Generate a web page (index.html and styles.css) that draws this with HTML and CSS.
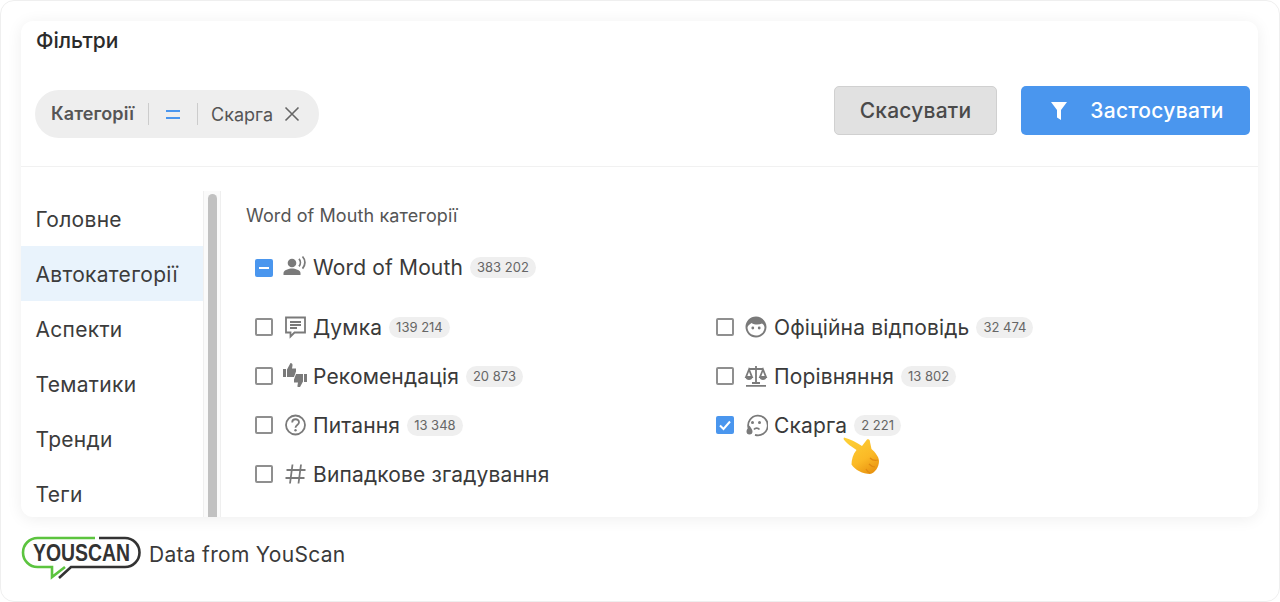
FILE: index.html
```html
<!DOCTYPE html>
<html>
<head>
  <title>Фільтри</title>
  <link rel="stylesheet" href="styles.css">
</head>
<body>
  <div class="frame">
    <div class="card">
      <div class="card-head">
        <h1 class="title">Фільтри</h1>
        <div class="toolbar">
          <div class="chip">
            <b class="chip-name">Категорії</b>
            <span class="chip-op"><i></i><i></i></span>
            <span class="chip-value">Скарга</span>
            <svg class="chip-close" viewBox="0 0 16 16"><path d="M1.500 1.500l13 13M14.500 1.500l-13 13"/></svg>
          </div>
          <div class="actions">
            <button class="btn btn-cancel">Скасувати</button>
            <button class="btn btn-apply">
              <svg class="btn-icon" viewBox="0 0 18 20"><path d="M1 1h16l-6 8v10l-4-2.500V9z"/></svg>
              Застосувати
            </button>
          </div>
        </div>
      </div>

      <div class="card-body">
        <ul class="side">
          <li>Головне</li>
          <li class="active">Автокатегорії</li>
          <li>Аспекти</li>
          <li>Тематики</li>
          <li>Тренди</li>
          <li>Теги</li>
        </ul>
        <div class="scroll"><div class="thumb"></div></div>

        <div class="content">
          <div class="content-title">Word of Mouth категорії</div>

          <div class="opt opt-root">
            <span class="box box-mixed"><i></i></span>
            <svg class="icon" viewBox="0 0 24 24"><circle cx="9" cy="8" r="4.300" class="fill"/><path class="fill" d="M.5 20v-2c0-3 5.500-4.500 8.500-4.500s8.500 1.500 8.500 4.500v2z"/><path class="line" d="M16 3.800c1.800 2.100 1.800 5.400 0 7.500M19.500 1.500c3.200 3.400 3.200 8.800 0 12.200"/></svg>
            <span class="opt-name">Word of Mouth</span>
            <span class="count">383 202</span>
          </div>

          <div class="opts">
            <div class="opt">
              <span class="box"></span>
              <svg class="icon" viewBox="0 0 24 24"><path class="line" d="M3 2.500h19v15H11.500L7.500 21.500v-4H3zM7 7h11M7 10h11M7 13h7"/></svg>
              <span class="opt-name">Думка</span>
              <span class="count">139 214</span>
            </div>
            <div class="opt">
              <span class="box"></span>
              <svg class="icon icon-wide" viewBox="0 0 24 24"><path class="fill" d="M0 6h3v8H0zM4 14V6.500L7.500 0c1.500 0 2.200 1 2 2.500L9 5.500h4v3l-2 5.500z"/><path class="fill" transform="rotate(180 12 12.500)" d="M0 6h3v8H0zM4 14V6.500L7.500 0c1.500 0 2.200 1 2 2.500L9 5.500h4v3l-2 5.500z"/></svg>
              <span class="opt-name">Рекомендація</span>
              <span class="count">20 873</span>
            </div>
            <div class="opt">
              <span class="box"></span>
              <svg class="icon" viewBox="0 0 24 24"><circle class="line" cx="12.500" cy="12" r="9.500"/><path class="line" d="M9.200 9.500c0-4.300 6.800-4.300 6.800-.2 0 2.700-3.500 2.700-3.500 5.400"/><circle class="fill" cx="12.500" cy="17.300" r="1.200"/></svg>
              <span class="opt-name">Питання</span>
              <span class="count">13 348</span>
            </div>
            <div class="opt">
              <span class="box"></span>
              <svg class="icon" viewBox="0 0 24 24"><path class="line" d="M9.500 2.500L7 21.500M18 2.500L15.500 21.500M3.500 8h19M2.500 16h19"/></svg>
              <span class="opt-name">Випадкове згадування</span>
            </div>
          </div>

          <div class="opts opts-right">
            <div class="opt">
              <span class="box"></span>
              <svg class="icon" viewBox="0 0 24 24"><path class="fill" fill-rule="evenodd" d="M12 1.500c5.800 0 10.500 4.700 10.500 10.500S17.800 22.500 12 22.500 1.500 17.800 1.500 12 6.200 1.500 12 1.500zM7.500 8c-1.500 1.500-4 2.500-4 4.500 0 4.400 4 8 8.500 8s8.500-3.600 8.500-8c0-1.500-1-3-2.500-4-3 1.500-7.500 1.500-10.500-.5z"/><circle class="fill" cx="8.800" cy="13" r="1.400"/><circle class="fill" cx="15.200" cy="13" r="1.400"/></svg>
              <span class="opt-name">Офіційна відповідь</span>
              <span class="count">32 474</span>
            </div>
            <div class="opt">
              <span class="box"></span>
              <svg class="icon" viewBox="0 0 24 24"><path class="line" d="M12 2v17M5 5h14M2 21.800h20M8 19h8M5 5.500L2 13h6zM19 5.500L16 13h6z"/><path class="fill" d="M1.500 13h7c0 4-7 4-7 0zM15.500 13h7c0 4-7 4-7 0z"/></svg>
              <span class="opt-name">Порівняння</span>
              <span class="count">13 802</span>
            </div>
            <div class="opt">
              <span class="box box-checked">
                <svg viewBox="0 0 18 18"><path d="M4 9.500l3.500 3.500L14 5.500"/></svg>
              </span>
              <svg class="icon" viewBox="0 0 24 24"><path class="line" d="M4.500 15A9.800 9.800 0 1 1 11 21.800"/><circle class="fill" cx="8.500" cy="9.500" r="1.500"/><circle class="fill" cx="15.500" cy="9.500" r="1.500"/><path class="line" d="M10 16.500c1.300-1.800 4-1.800 5.500 0"/><path class="fill" d="M5.500 12.500c1.500 2.800 3 4 3 6a3 3 0 0 1-6 0c0-2 1.500-3.200 3-6z"/></svg>
              <span class="opt-name">Скарга</span>
              <span class="count">2 221</span>
            </div>
          </div>

          <svg class="hand" viewBox="0 0 38 40">
            <defs>
              <linearGradient id="handFill" x1="0.2" y1="0" x2="0.8" y2="1">
                <stop offset="0" stop-color="#fdcf35"/>
                <stop offset="0.6" stop-color="#fbb926"/>
                <stop offset="1" stop-color="#e8920f"/>
              </linearGradient>
            </defs>
            <path fill="url(#handFill)" d="M2 1.500C8 3 15 6.500 20 10L25 3.500C27 2.500 28 4 28 6L29.500 13C33 16 37 21 37 25C37 31 33 37 28 38C21 38 13 34 9.500 28.500C9.500 24 11 18 14.500 14C10 11 4 7 1.500 3z"/>
            <path fill="none" stroke="#e08a12" stroke-width="1.200" d="M36 24C33 25 30 24 28 22M33 31C31 31 29 30 27 28M28 37C26 36 25 35 24 33"/>
          </svg>
        </div>
      </div>
    </div>

    <div class="source">
      <svg class="logo" viewBox="0 0 120 44">
        <path class="logo-green" d="M74 2H16.500A14.500 14.500 0 0 0 16.500 31H31V41L44 31"/>
        <path class="logo-dark" d="M78 2H104A14.500 14.500 0 0 1 104 31H50L38 42"/>
        <text class="logo-text" x="12" y="25" textLength="97" lengthAdjust="spacingAndGlyphs">YOUSCAN</text>
      </svg>
      <span class="source-text">Data from YouScan</span>
    </div>
  </div>
</body>
</html>
```

FILE: styles.css
```css
* {
  box-sizing: border-box;
}
html, body {
  margin: 0;
  height: 100%;
  background: #fff;
}
body {
  font-family: Inter, "Noto Sans", sans-serif;
  color: #333;
  overflow: hidden;
}
.frame {
  width: 1280px;
  height: 602px;
  padding: 21px 21px 0;
  border: 1px solid #efefef;
  border-radius: 14px;
  background: #fff;
}
.card {
  width: 1237px;
  height: 496px;
  margin-top: -1px;
  margin-left: -1px;
  background: #fff;
  border-radius: 12px;
  box-shadow: 0 2px 16px rgba(0, 0, 0, 0.07);
  overflow: hidden;
}
.card-head {
  height: 146px;
  padding: 7px 8px 0 15px;
  border-bottom: 1px solid #f1f1f1;
}
.title {
  margin: 0;
  font-size: 21px;
  font-weight: 500;
  line-height: 25px;
  color: #2b2b2b;
}
.toolbar {
  display: flex;
  justify-content: space-between;
  align-items: flex-start;
  margin-top: 33px;
}
.chip {
  display: flex;
  align-items: center;
  height: 48px;
  margin: 4px 0 0 -1px;
  padding: 0 19px 0 16px;
  background: #eeeeee;
  border-radius: 24px;
  font-size: 18px;
  color: #555;
}
.chip-name {
  font-weight: 600;
  color: #555;
  padding-right: 14px;
  border-right: 1px solid #ccc;
  line-height: 22px;
  letter-spacing: 0.1px;
}
.chip-op {
  display: flex;
  flex-direction: column;
  gap: 5px;
  width: 49px;
  padding: 0 17px;
  height: 22px;
  justify-content: center;
  border-right: 1px solid #ccc;
}
.chip-op i {
  display: block;
  height: 2px;
  background: #4a96ee;
}
.chip-value {
  padding-left: 13px;
}
.chip-close {
  width: 16px;
  height: 16px;
  margin-left: 11px;
  fill: none;
  stroke: #666;
  stroke-width: 1.6;
}
.actions {
  display: flex;
  gap: 24px;
}
.btn {
  height: 49px;
  border-radius: 5px;
  font-family: inherit;
  font-size: 21px;
  font-weight: 500;
  display: flex;
  align-items: center;
  justify-content: center;
}
.btn-cancel {
  width: 163px;
  background: #e1e1e1;
  border: 1px solid #d0d0d0;
  color: #4a4a4a;
  letter-spacing: 0.2px;
}
.btn-apply {
  width: 229px;
  padding: 0 2px 0 5px;
  background: #4a96ee;
  border: 0;
  color: #fff;
  gap: 22px;
  letter-spacing: 0.3px;
}
.btn-icon {
  width: 18px;
  height: 20px;
  fill: #fff;
}
.card-body {
  display: flex;
  height: 350px;
}
.side {
  list-style: none;
  margin: 24px 0 0;
  padding: 0;
  width: 182px;
}
.side li {
  height: 55px;
  line-height: 57px;
  padding-left: 14.5px;
  font-size: 21px;
  letter-spacing: 0.3px;
  color: #3c3c3c;
}
.side li.active {
  background: #e9f3fc;
}
.scroll {
  width: 18px;
  margin-top: 24px;
  padding: 3px 3px 0 4px;
  background: #fafafa;
  border-right: 1px solid #efefef;
  border-left: 1px solid #efefef;
}
.thumb {
  height: 400px;
  border-radius: 5px;
  background: #c1c1c1;
}
.content {
  position: relative;
  flex: 1;
  display: grid;
  grid-template-columns: 461px 1fr;
  grid-template-rows: auto auto 1fr;
  padding: 39px 0 0 34px;
}
.content-title {
  grid-column: 1 / 3;
  margin-left: -9px;
  font-size: 18px;
  letter-spacing: 0.1px;
  line-height: 20px;
  color: #555;
}
.opt-root {
  grid-column: 1 / 3;
  margin-top: 17px;
  margin-bottom: 11px;
}
.opt {
  display: flex;
  align-items: center;
  height: 49px;
}
.opts .box {
  margin-top: -1px;
}
.opts-right {
  grid-column: 2;
}
.box {
  flex: none;
  width: 18px;
  height: 18px;
  border: 2px solid #8f8f8f;
  border-radius: 2px;
  background: #fff;
  display: flex;
  align-items: center;
  justify-content: center;
}
.box-mixed, .box-checked {
  border: 0;
  background: #4a96ee;
}
.box-mixed i {
  display: block;
  width: 10px;
  height: 2px;
  background: #fff;
}
.box-checked svg {
  width: 18px;
  height: 18px;
  fill: none;
  stroke: #fff;
  stroke-width: 2;
}
.icon {
  flex: none;
  width: 24px;
  height: 24px;
  margin: -2px 6px 0 10px;
}
.icon-wide {
  margin-top: -4px;
}
.icon .fill {
  fill: #7a7a7a;
}
.icon .line {
  fill: none;
  stroke: #7a7a7a;
  stroke-width: 1.8;
}
.opt-name {
  font-size: 21px;
  letter-spacing: 0.15px;
  color: #3a3a3a;
}
.count {
  margin-left: 7px;
  height: 21px;
  line-height: 21px;
  padding: 0 7px;
  border-radius: 11px;
  background: #efefef;
  font-size: 13px;
  color: #666;
}
.hand {
  position: absolute;
  left: 621px;
  top: 269px;
  width: 38px;
  height: 40px;
}
.source {
  display: flex;
  align-items: center;
  gap: 8px;
  margin: 19px 0 0 -1px;
}
.logo {
  width: 120px;
  height: 44px;
  fill: none;
  overflow: visible;
}
.logo-green {
  stroke: #5cc43f;
  stroke-width: 2.6;
}
.logo-dark {
  stroke: #333;
  stroke-width: 2.6;
}
.logo-text {
  fill: #333;
  font-family: "Liberation Sans", sans-serif;
  font-weight: 700;
  font-size: 23px;
}
.source-text {
  font-size: 21px;
  letter-spacing: 0.3px;
  color: #3a3a3a;
  margin-top: -7px;
}
```
